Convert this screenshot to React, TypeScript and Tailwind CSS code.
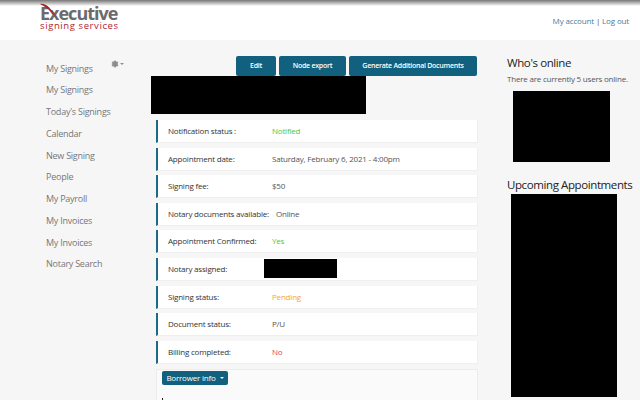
import { Settings } from "lucide-react";

const font = "[font-family:'Open_Sans',sans-serif]";

const navItems = [
  "My Signings",
  "My Signings",
  "Today's Signings",
  "Calendar",
  "New Signing",
  "People",
  "My Payroll",
  "My Invoices",
  "My Invoices",
  "Notary Search",
];

const InfoRow = ({ label, children }: { label: string; children: React.ReactNode }) => (
  <div className="flex items-center h-[23px] bg-white border-l-2 border-[#1d6a88] border-r border-r-[#efefef] border-b border-b-[#efefef] pl-[10px] text-[8px] tracking-[-0.2px] text-[#333] whitespace-nowrap">
    <span className="w-[104px] shrink-0">{label}</span>
    {children}
  </div>
);

const ActionButton = ({ label, width }: { label: string; width: string }) => (
  <button className={`${width} h-[20px] bg-[#11617e] rounded-[2px] text-white text-[7px] tracking-[-0.25px] font-semibold whitespace-nowrap`}>
    {label}
  </button>
);

export default function App() {
  return (
    <div className={`${font} relative w-[640px] h-[400px] overflow-hidden bg-[#f6f6f6]`}>
      <header className="relative flex justify-between h-[40px] bg-white pl-[40px] pr-[11px]">
        <div className="absolute top-0 left-0 right-0 h-[6px] bg-gradient-to-b from-[#777] to-[#ffffff]" />
        <div className="relative flex flex-col pt-[4px]">
          <svg className="absolute left-0 top-[3px]" width="18" height="16" viewBox="0 0 18 16">
            <path d="M0 1 C6 0 11 5 17 15 C11 8 6 4 0 1 Z" fill="#a3262c" />
          </svg>
          <span className="text-[18px] leading-[18px] font-bold text-[#6b6b6d] tracking-[-1px]">Executive</span>
          <span className="text-[9.5px] leading-[8px] text-[#b3262e] tracking-[0.6px]">signing services</span>
        </div>
        <div className="relative pt-[15px] text-[8px] leading-[12px] tracking-[-0.15px] text-[#44809b]">
          My account <span className="text-[#555]">|</span> Log out
        </div>
      </header>

      <div className="flex">
        <aside className="relative w-[151px] shrink-0 pl-[46px] pt-[17.5px]">
          {navItems.map((item, i) => (
            <div key={i} className="h-[21.75px] leading-[21.75px] text-[9px] tracking-[-0.25px] text-[#777]">
              {item}
            </div>
          ))}
          <div className="absolute left-[111px] top-[20px] flex items-center text-[#8d8d8d]">
            <Settings size={8} fill="#8d8d8d" />
            <span className="ml-[1px] border-x-[2px] border-x-transparent border-t-[2px] border-t-[#8d8d8d]" />
          </div>
        </aside>

        <main className="w-[327px] shrink-0">
          <div className="flex justify-end gap-[3px] pt-[16px] pr-[1px]">
            <ActionButton label="Edit" width="w-[40px]" />
            <ActionButton label="Node export" width="w-[67px]" />
            <ActionButton label="Generate Additional Documents" width="w-[128px]" />
          </div>
          <div className="w-[215px] h-[38px] bg-black" />
          <div className="flex flex-col gap-[4.6px] mt-[6px] pl-[5px]">
            <InfoRow label="Notification status :">
              <span className="text-[#45c945]">Notified</span>
            </InfoRow>
            <InfoRow label="Appointment date:">
              <span className="text-[#555]">Saturday, February 6, 2021 - 4:00pm</span>
            </InfoRow>
            <InfoRow label="Signing fee:">
              <span className="text-[#555]">$50</span>
            </InfoRow>
            <InfoRow label="Notary documents available:">
              <span className="text-[#555] ml-[4px]">Online</span>
            </InfoRow>
            <InfoRow label="Appointment Confirmed:">
              <span className="text-[#45c945]">Yes</span>
            </InfoRow>
            <InfoRow label="Notary assigned:">
              <span className="w-[73px] h-[19px] bg-black -ml-[8px]" />
            </InfoRow>
            <InfoRow label="Signing status:">
              <span className="text-[#f4a637]">Pending</span>
            </InfoRow>
            <InfoRow label="Document status:">
              <span className="text-[#555]">P/U</span>
            </InfoRow>
            <InfoRow label="Billing completed:">
              <span className="text-[#e0405f]">No</span>
            </InfoRow>
          </div>
          <div className="ml-[5px] mt-[5px] h-[60px] bg-[#fafafa] border border-[#ececec] pl-[5px] pt-[1px]">
            <button className="flex items-center justify-center w-[66px] h-[14px] bg-[#11617e] rounded-[2px] text-white text-[8px] tracking-[-0.2px]">
              Borrower info
              <span className="ml-[4px] border-x-[2px] border-x-transparent border-t-[2px] border-t-white" />
            </button>
            <div className="w-px h-[2px] bg-[#222] mt-[13px]" />
          </div>
        </main>

        <aside className="pl-[29px] pt-[14px] w-[162px] shrink-0">
          <h2 className="text-[11.5px] leading-[18px] tracking-[-0.4px] text-[#222]">Who's online</h2>
          <p className="text-[8px] leading-[12px] tracking-[-0.2px] text-[#555] mt-[1px] whitespace-nowrap">
            There are currently 5 users online.
          </p>
          <div className="w-[97px] h-[71px] bg-black ml-[6px] mt-[6px]" />
          <h2 className="text-[11.5px] leading-[18px] tracking-[-0.4px] text-[#222] mt-[14px] whitespace-nowrap">
            Upcoming Appointments
          </h2>
          <div className="w-[106px] h-[203px] bg-black ml-[4px]" />
        </aside>
      </div>
    </div>
  );
}
